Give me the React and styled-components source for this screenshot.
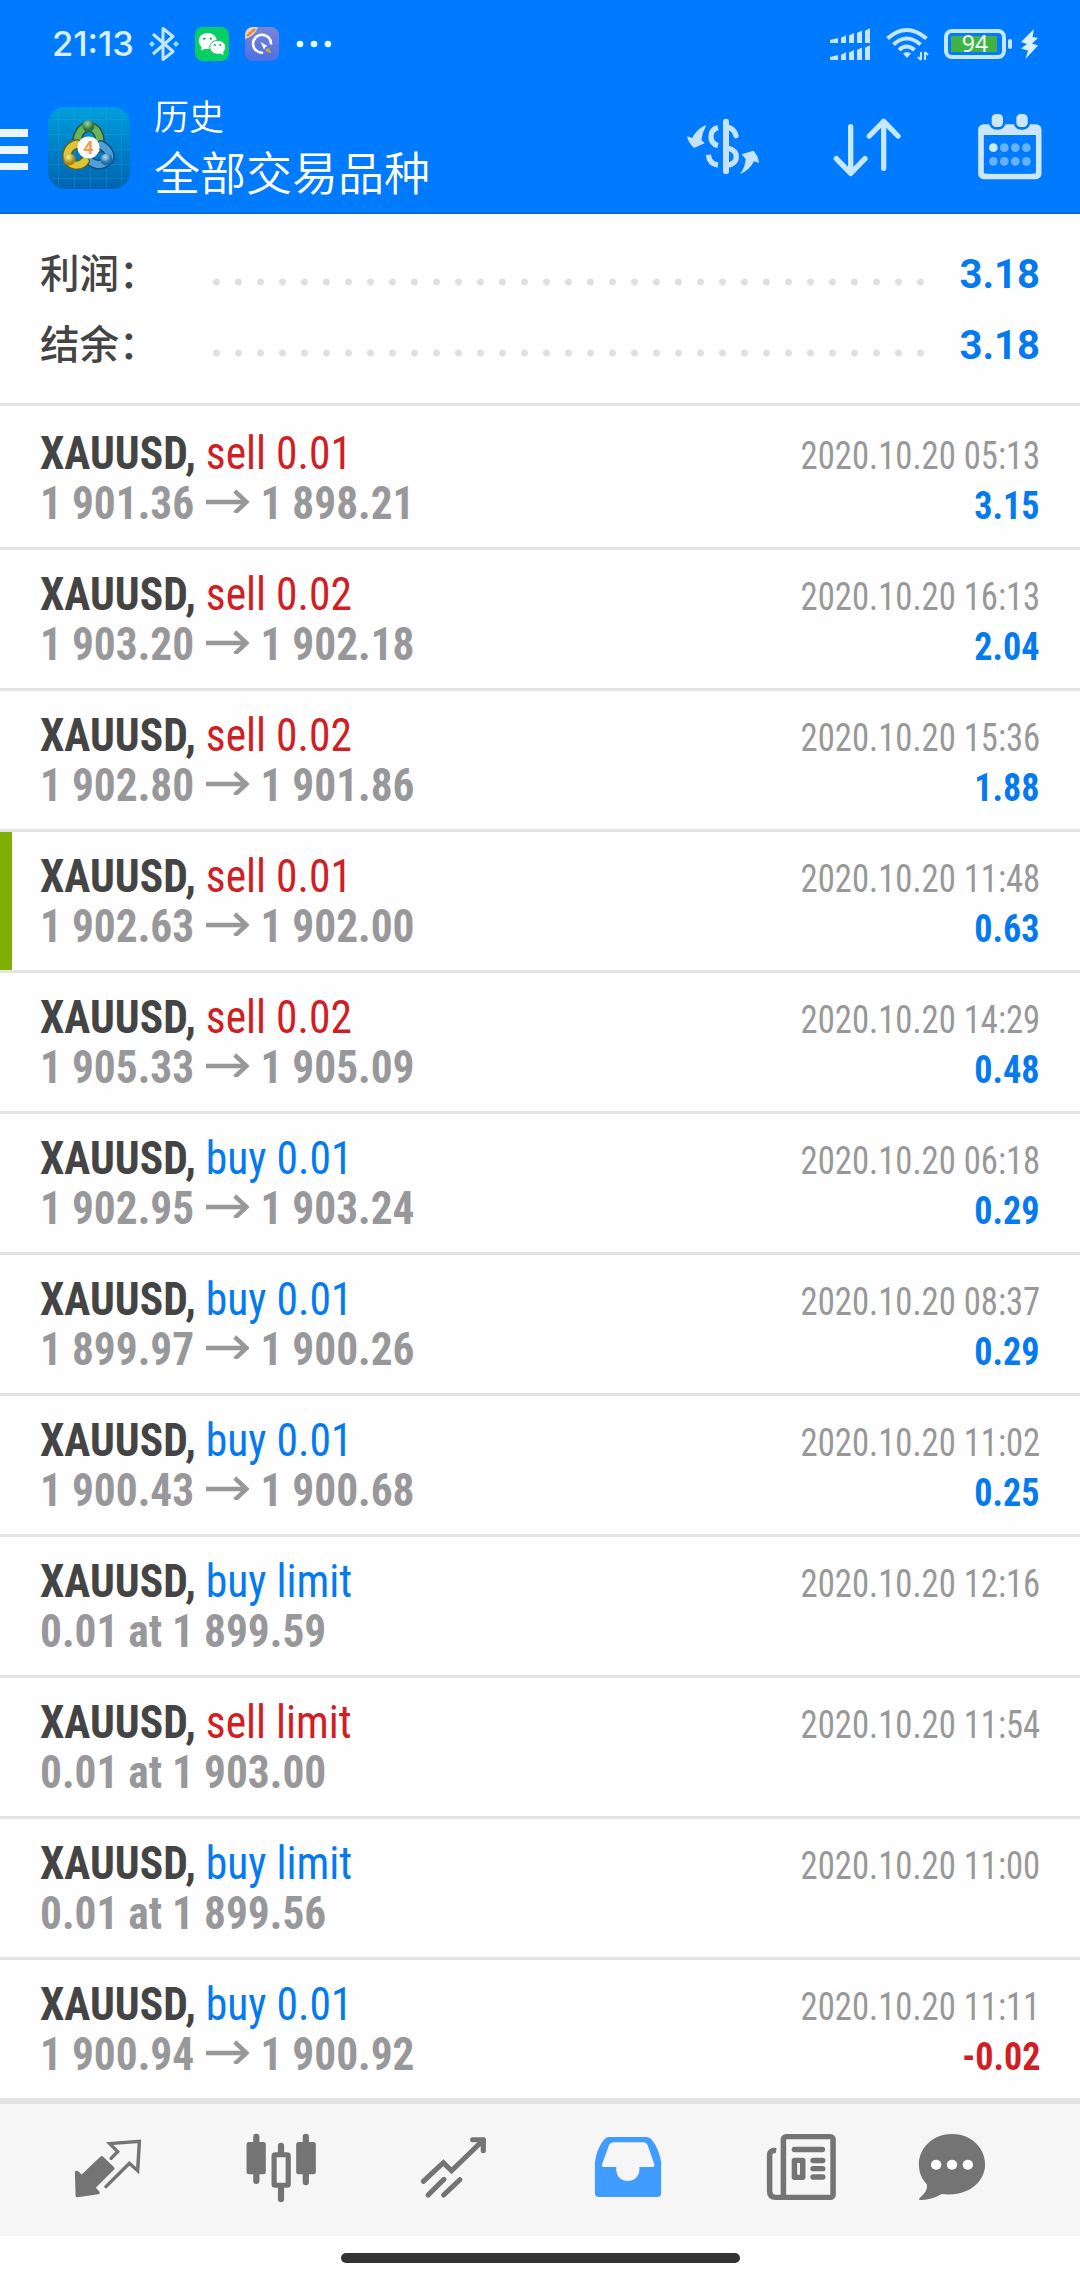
import React from 'react';
import styled, { createGlobalStyle } from 'styled-components';

const ORDERS = [
  {id: 1, type: 'sell', volume: '0.01', open: '1 901.36', close: '1 898.21', time: '2020.10.20 05:13', profit: '3.15'},
  {id: 2, type: 'sell', volume: '0.02', open: '1 903.20', close: '1 902.18', time: '2020.10.20 16:13', profit: '2.04'},
  {id: 3, type: 'sell', volume: '0.02', open: '1 902.80', close: '1 901.86', time: '2020.10.20 15:36', profit: '1.88'},
  {id: 4, type: 'sell', volume: '0.01', open: '1 902.63', close: '1 902.00', time: '2020.10.20 11:48', profit: '0.63', marked: true},
  {id: 5, type: 'sell', volume: '0.02', open: '1 905.33', close: '1 905.09', time: '2020.10.20 14:29', profit: '0.48'},
  {id: 6, type: 'buy', volume: '0.01', open: '1 902.95', close: '1 903.24', time: '2020.10.20 06:18', profit: '0.29'},
  {id: 7, type: 'buy', volume: '0.01', open: '1 899.97', close: '1 900.26', time: '2020.10.20 08:37', profit: '0.29'},
  {id: 8, type: 'buy', volume: '0.01', open: '1 900.43', close: '1 900.68', time: '2020.10.20 11:02', profit: '0.25'},
  {id: 9, type: 'buy', volume: 'limit', pending: '0.01 at 1 899.59', time: '2020.10.20 12:16'},
  {id: 10, type: 'sell', volume: 'limit', pending: '0.01 at 1 903.00', time: '2020.10.20 11:54'},
  {id: 11, type: 'buy', volume: 'limit', pending: '0.01 at 1 899.56', time: '2020.10.20 11:00'},
  {id: 12, type: 'buy', volume: '0.01', open: '1 900.94', close: '1 900.92', time: '2020.10.20 11:11', profit: '-0.02'}
];

const SUMMARY = [
  {label: '利润：', value: '3.18'},
  {label: '结余：', value: '3.18'}
];

const BLUE = '#057aee';
const RED = '#cf1f25';

const GlobalStyle = createGlobalStyle`
  body {
    margin: 0;
    background: #fefefe;
    font-family: 'Roboto Condensed', Roboto, 'Noto Sans CJK SC', sans-serif;
  }

  svg {
    display: block;
    flex: none;
  }
`;

const Screen = styled.div`
  width: 1080px;
  height: 2280px;
  display: flex;
  flex-direction: column;
  overflow: hidden;
`;

const Header = styled.header`
  height: 214px;
  box-sizing: border-box;
  background: #007aff;
  border-bottom: 2px solid #0a6bd0;
`;

const StatusBar = styled.div`
  height: 88px;
  padding: 0 41px 0 52px;
  display: flex;
  align-items: center;
`;

const Clock = styled.span`
  width: 97px;
  color: #d8f0ff;
  font: 500 34.5px/88px Inter, sans-serif;
`;

const StatusIcons = styled.div`
  display: flex;
  align-items: center;
  gap: ${({ $gap }) => $gap}px;
  margin-left: ${({ $right }) => $right ? 'auto' : '0'};
`;

const TitleBar = styled.div`
  height: 124px;
  display: flex;
  align-items: flex-start;
`;

const MenuBars = styled.div`
  width: 27.5px;
  margin: 41px 20px 0 0;
  display: flex;
  flex-direction: column;
  gap: 9px;
`;

const MenuBar = styled.span`
  height: 7.8px;
  background: #e9f6ff;
`;

const AppLogo = styled.div`
  margin: 19px 24.5px 0 0;
`;

const Titles = styled.div`
  flex: 1;
  color: #fff;
  font-family: 'Noto Sans CJK SC', sans-serif;
  font-weight: 350;
`;

const Title = styled.div`
  font-size: 35px;
  line-height: 50px;
  padding-top: 2px;
`;

const Subtitle = styled.div`
  font-size: 46px;
  line-height: 60px;
`;

const Actions = styled.div`
  display: flex;
  padding: 22px 36px 0 0;
  gap: 72px;
`;

const Summary = styled.section`
  height: 192px;
  box-sizing: border-box;
  padding: 22px 40px 0;
  border-bottom: 3px solid #e4e4e4;
`;

const SummaryRow = styled.div`
  height: 71px;
  display: flex;
  align-items: baseline;
`;

const SummaryLabel = styled.span`
  width: 172px;
  color: #444;
  font: 500 39.5px/70px 'Noto Sans CJK SC', sans-serif;
`;

const Leader = styled.span`
  width: 726px;
  height: 22px;
  align-self: flex-start;
  margin-top: 34.5px;
  background: radial-gradient(circle at 4.5px 11px, #e0e0e0 3px, transparent 4px) 0 0 / 22px 22px;
`;

const SummaryValue = styled.span`
  margin-left: auto;
  color: ${BLUE};
  font: 700 40px/70px Roboto, sans-serif;
`;

const OrderList = styled.ul`
  list-style: none;
  margin: 0;
  padding: 3px 0 0;
`;

const OrderItem = styled.li`
  height: 141px;
  box-sizing: border-box;
  padding: 19px 40px 0;
  border-bottom: 3px solid #e4e4e4;
  position: relative;
`;

const Marker = styled.span`
  position: absolute;
  left: 0;
  top: 0;
  width: 12px;
  height: 138px;
  background: #7eb000;
`;

const Line = styled.div`
  height: 50px;
  display: flex;
  align-items: baseline;
  justify-content: space-between;
  line-height: 50px;
  white-space: pre;
  font-stretch: 75%;
`;

const Symbol = styled.span`
  color: #444;
  font-size: 46px;
  font-weight: 700;
  transform: scaleX(0.946);
  transform-origin: left;
`;

const Action = styled.span`
  color: ${({ $type }) => $type === 'sell' ? RED : BLUE};
  font-weight: 400;
`;

const Price = styled.span`
  color: #98989a;
  font-size: 46px;
  font-weight: 700;
  transform: scaleX(0.943);
  transform-origin: left;
`;

const Time = styled.span`
  color: #98989a;
  font-size: 38.5px;
  transform: scaleX(0.9);
  transform-origin: right;
`;

const Profit = styled.span`
  color: ${({ $loss }) => $loss ? RED : BLUE};
  font-size: 38.5px;
  font-weight: 700;
  transform: scaleX(0.938);
  transform-origin: right;
`;

const Arrow = styled.svg`
  display: inline-block;
  margin: 0 11.4px 6px 12.6px;
`;

const TabBar = styled.nav`
  height: 138px;
  box-sizing: border-box;
  margin-top: -3px;
  padding-left: 21.5px;
  display: flex;
  position: relative;
  background: #f6f6f6;
  border-top: 6px solid #e3e3e3;
`;

const Tab = styled.div`
  width: ${({ $narrow }) => $narrow ? '130px' : '173.2px'};
  padding-top: 25px;
  display: flex;
  align-items: flex-start;
  justify-content: center;
  color: ${({ $active }) => $active ? '#409cff' : '#747474'};
`;

const HomeArea = styled.div`
  flex: 1;
  display: flex;
  justify-content: center;
  padding-top: 17px;
`;

const HomeBar = styled.div`
  width: 399px;
  height: 10px;
  border-radius: 5px;
  background: #333;
`;

function BluetoothIcon() {
  return (
    <svg width="30" height="36" viewBox="0 0 30 36" fill="none" stroke="#c2e6ff" strokeWidth="3">
      <path d="M4 8 L24 25.5 L14 33.5 V2.5 L24 10.5 L4 28" strokeLinejoin="round" />
      <path d="M3 15 l3 3 l-3 3 l-3 -3z M27 15 l3 3 l-3 3 l-3 -3z" fill="#8fe0ff" stroke="none" />
    </svg>
  );
}

function WechatIcon() {
  return (
    <svg width="34" height="34" viewBox="0 0 34 34">
      <rect width="34" height="34" rx="8" fill="#07cf63" />
      <path d="M6 23.5 l1-6 l6 3z" fill="#fff" />
      <ellipse cx="12.7" cy="14" rx="9" ry="8" fill="#fff" />
      <ellipse cx="22.7" cy="20.3" rx="8" ry="7" fill="#fff" stroke="#07cf63" strokeWidth="1" />
      <path d="M24 26 l4.5 2 l-.5-5z" fill="#fff" />
      <g fill="#07b657">
        <circle cx="9.3" cy="11.6" r="1.2" /><circle cx="15.8" cy="11.6" r="1.2" />
        <circle cx="20" cy="18" r="1" /><circle cx="25.2" cy="18" r="1" />
      </g>
    </svg>
  );
}

function BrowserIcon() {
  return (
    <svg width="34" height="34" viewBox="0 0 34 34">
      <defs>
        <clipPath id="browserClip"><rect width="34" height="34" rx="8" /></clipPath>
        <linearGradient id="browserBg" x1="0" y1="0" x2="0" y2="1">
          <stop offset="0" stopColor="#7a85d6" /><stop offset="1" stopColor="#4c6fe3" />
        </linearGradient>
      </defs>
      <g clipPath="url(#browserClip)">
        <rect width="34" height="34" fill="url(#browserBg)" />
        <path d="M0 0 H13 Q10 9 0 12z" fill="#e8cfc0" />
        <path d="M2 9 L10 2" stroke="#e08a35" strokeWidth="2.4" />
        <path d="M18 25.700 A9 9 0 1 1 26 17.500" fill="none" stroke="#fff" strokeWidth="2.600" />
        <path d="M15.500 15 L22.500 19 L20.500 20 L19 22.500z" fill="#fff" />
        <path d="M20 22 L24 21 L26.500 26 L21.500 25z" fill="#c3a24e" />
      </g>
    </svg>
  );
}

function MoreIcon() {
  return (
    <svg width="36" height="8" viewBox="0 0 36 8" fill="#e4fbff">
      <circle cx="5" cy="4" r="3.300" /><circle cx="19" cy="4" r="3.300" /><circle cx="33" cy="4" r="3.300" />
    </svg>
  );
}

// Two stacked antennas, one per SIM
function SignalIcon() {
  const bars = [0, 1, 2, 3, 4];
  return (
    <svg width="41" height="34" viewBox="0 0 41 34" fill="#c4e6ff">
      {[16, 33].map(base => bars.map(i => {
        const x = i === 0 ? 0 : 3 + i * 8;
        const w = i === 0 ? 8 : 5;
        const h = i === 0 ? 5 : 5 + i * 2.3;
        return <path key={base + '-' + i} d={`M${x} ${base} V${base - h + 2} L${x + w} ${base - h - (i === 0 ? 0 : 0.5)} V${base} z`} />;
      }))}
    </svg>
  );
}

function WifiIcon() {
  return (
    <svg width="43" height="34" viewBox="0 0 43 34" fill="none" stroke="#c4e6ff" strokeWidth="4">
      <path d="M1.5 11.5 Q20.500 -5.500 40.500 11.500" />
      <path d="M7.500 17.500 Q20.500 5.500 34.500 17.500" />
      <path d="M13 23 Q20.500 16 28.500 23" />
      <path d="M17 26.500 Q21 23.500 25 26.500 L21 31z" fill="#c4e6ff" stroke="none" />
      <path d="M35 25 V33 M35 33 l-3 -3 M39 33 V25 M39 25 l3 3" strokeWidth="2" />
    </svg>
  );
}

function BatteryIcon() {
  return (
    <svg width="69" height="32" viewBox="0 0 69 32">
      <rect x="2" y="3" width="58" height="26" rx="6" fill="none" stroke="#c4e6ff" strokeWidth="4" />
      <rect x="7" y="8" width="46" height="16" rx="1" fill="#43b244" />
      <rect x="64" y="11" width="4" height="10" rx="2" fill="#c4e6ff" />
      <text x="31" y="24" textAnchor="middle" fill="#eefcff" fontFamily="'Noto Sans', sans-serif" fontSize="23">94</text>
    </svg>
  );
}

const BoltSvg = styled.svg`
  margin-left: -7px;
`;

function BoltIcon() {
  return (
    <BoltSvg width="18" height="32" viewBox="0 0 18 32" fill="#d8f0ff">
      <path d="M13 1 L0 14 L6 16 L0 20.500 L7 22.500 L4.500 31 L17 17.500 L11 15.500 L17 10 L11.500 9z" />
    </BoltSvg>
  );
}

function LogoIcon() {
  return (
    <svg width="82" height="82" viewBox="0 0 82 82">
      <defs>
        <linearGradient id="logoBg" x1="0" y1="0" x2="0" y2="1">
          <stop offset="0" stopColor="#009fdc" />
          <stop offset="0.5" stopColor="#0080c8" />
          <stop offset="1" stopColor="#0064b0" />
        </linearGradient>
        <radialGradient id="knobGreen" cx="0.4" cy="0.3"><stop offset="0" stopColor="#a5d69a" /><stop offset="1" stopColor="#2c7540" /></radialGradient>
        <radialGradient id="knobGold" cx="0.4" cy="0.3"><stop offset="0" stopColor="#fff0a0" /><stop offset="1" stopColor="#a98a10" /></radialGradient>
        <radialGradient id="knobBlue" cx="0.4" cy="0.3"><stop offset="0" stopColor="#b5e3f8" /><stop offset="1" stopColor="#1c6aa5" /></radialGradient>
      </defs>
      <rect width="82" height="82" rx="17" fill="url(#logoBg)" />
      <path d="M10.500 3V79 M26.500 0V82 M42.500 0V82 M58.500 0V82 M73.500 3V79 M3 12.500H79 M0 27.500H82 M0 42.500H82 M0 57.500H82 M3 71.500H79" stroke="#35b5e6" strokeOpacity="0.2" />
      <g fill="none" strokeLinecap="round">
        <path d="M29.500 38 C28 27 34 20 40.500 20 C48 20 54 28 51 41" stroke="#275a38" strokeWidth="10" />
        <path d="M29.500 38 C28 27 34 20 40.500 20 C48 20 54 28 51 41" stroke="#6cb258" strokeWidth="7" />
        <path d="M53 38 C62 43 64 51 59.500 54 C53 60 44 58 38 50" stroke="#164c80" strokeWidth="10" />
        <path d="M53 38 C62 43 64 51 59.500 54 C53 60 44 58 38 50" stroke="#4f9fdb" strokeWidth="7" />
        <path d="M29 37 C20 39 17 48 20.500 54 C25 60 33 59 37 54" stroke="#5c6425" strokeWidth="10" />
        <path d="M29 37 C20 39 17 48 20.500 54 C25 60 33 59 37 54" stroke="#dcc437" strokeWidth="7" />
      </g>
      <circle cx="40.500" cy="19" r="6" fill="url(#knobGreen)" />
      <circle cx="21.500" cy="52.500" r="6" fill="url(#knobGold)" />
      <circle cx="58.500" cy="52.500" r="6" fill="url(#knobBlue)" />
      <circle cx="40.500" cy="40.500" r="11" fill="#fff" />
      <text x="40.500" y="47" textAnchor="middle" fill="#f39a4c" fontFamily="Roboto, sans-serif" fontWeight="700" fontSize="18">4</text>
    </svg>
  );
}

function CurrencyIcon() {
  return (
    <svg width="74" height="72" viewBox="135 330 222 216" fill="none" stroke="#c5e2ff" strokeWidth="16">
      <path d="M255 365 V514" strokeWidth="18" strokeLinecap="round" />
      <path d="M231 383 Q210 388 210 410 Q210 431 231 437" />
      <path d="M202 464 Q205 492 231 495" />
      <path d="M262 382 Q280 387 285 407" strokeLinecap="round" />
      <path d="M258 444 Q286 450 286 470 Q286 491 258 496" />
      <g fill="#c5e2ff" stroke="none">
        <path d="M196 375 Q184 398 181 420 L191 430 L159 444 Q141 428 138 409 L154 414 Q168 385 196 375z" />
        <path d="M297 522 Q312 503 314 477 L302 463 L337 452 Q352 466 354 489 L339 484 Q326 511 297 522z" />
      </g>
    </svg>
  );
}

function SortIcon() {
  return (
    <svg width="70" height="72" viewBox="570 330 210 216" fill="none" stroke="#c5e8ff" strokeWidth="16" strokeLinecap="round" strokeLinejoin="round">
      <path d="M626 380 V520 M583 476 L626 520 L669 476" />
      <path d="M725 505 V364 M682 408 L725 364 L768 408" />
    </svg>
  );
}

function CalendarIcon() {
  return (
    <svg width="70" height="72" viewBox="998 330 210 216">
      <rect x="1019" y="381" width="173" height="148" rx="8" fill="none" stroke="#cce6ff" strokeWidth="17" />
      <path d="M1018 378 H1192 V405 H1018z" fill="#cce6ff" />
      <rect x="1028" y="405" width="155" height="116" rx="14" fill="#007aff" />
      <rect x="1047" y="338" width="42" height="47" rx="17" fill="#cce6ff" stroke="#007aff" strokeWidth="8" />
      <rect x="1121" y="338" width="42" height="47" rx="17" fill="#cce6ff" stroke="#007aff" strokeWidth="8" />
      {[443, 484].map(y => [1056, 1089, 1122, 1155].map(x => (
        <circle key={x + '-' + y} cx={x} cy={y} r="13" fill={x === 1056 && y === 443 ? '#c5efff' : '#66b2ff'} />
      )))}
    </svg>
  );
}

function TabIcon({ cx, children }) {
  return (
    <svg width="80" height="80" viewBox={`${cx - 116} 147 232 240`} preserveAspectRatio="none" fill="none" stroke="currentColor">
      {children}
    </svg>
  );
}

function QuotesIcon() {
  return (
    <TabIcon cx={315}>
      <path d="M224 277 L239 290 L297 233 L329 265 L273 323 L286 338 L226 347 Z" fill="currentColor" strokeWidth="10" strokeLinejoin="round" />
      <path d="M324 235 L343 215 L320 191 L406 184 L401 272 L377 250 L309 320" strokeWidth="10" strokeLinecap="round" />
    </TabIcon>
  );
}

function ChartIcon() {
  return (
    <TabIcon cx={816}>
      <path d="M744.500 170 V303 M888 170 V307 M816 197 V220 M816 325 V358" strokeWidth="18" strokeLinecap="round" />
      <rect x="716" y="186" width="56" height="97" rx="7" fill="currentColor" stroke="none" />
      <rect x="860" y="186" width="57" height="97" rx="7" fill="currentColor" stroke="none" />
      <rect x="796" y="224" width="41" height="92" rx="3" strokeWidth="15" />
    </TabIcon>
  );
}

function TradeIcon() {
  return (
    <TabIcon cx={1320}>
      <path d="M1231 304 L1289 248 L1313 272 L1405 180" strokeWidth="15" strokeLinecap="round" />
      <path d="M1374 179 H1405 V212" strokeWidth="15" strokeLinecap="round" strokeLinejoin="round" />
      <path d="M1245 345 L1291 298 M1290 345 L1337 299" strokeWidth="15" strokeLinecap="round" />
    </TabIcon>
  );
}

function HistoryIcon() {
  return (
    <TabIcon cx={254}>
      <path
        d="M158 245 Q164 205 184 179 Q190 171 199 171 H308 Q317 171 323 179 Q344 206 350 245 V340 Q350 351 339 351 H170 Q158 351 158 340z
          M213 187 Q203 187 199 196 L179 252 Q176 261 184 261 H220 V270 C222 314 285 314 287 270 V261 H325 Q333 261 330 252 L311 196 Q307 187 297 187z"
        fill="currentColor"
        fillRule="evenodd"
        stroke="none"
      />
    </TabIcon>
  );
}

function NewsIcon() {
  return (
    <TabIcon cx={757}>
      <rect x="706" y="170" width="144" height="182" rx="8" strokeWidth="16" />
      <path d="M685 212 Q666 209 666 226 V332 Q666 352 684 352 H710" strokeWidth="16" />
      <path d="M738 208.500 H819 M792 241.500 H820 M792 266 H820 M792 291 H820" strokeWidth="16" strokeLinecap="round" />
      <rect x="738" y="241" width="24" height="51" strokeWidth="16" strokeLinejoin="round" />
    </TabIcon>
  );
}

function ChatIcon() {
  return (
    <TabIcon cx={1199}>
      <path
        d="M1199 162 C1253 162 1295 202 1295 253 C1295 304 1249 352 1169 342 Q1140 360 1106 360 Q1101 358 1106 353 Q1130 334 1126 313 C1110 296 1103 276 1103 253 C1103 202 1146 162 1199 162z"
        fill="currentColor"
        stroke="none"
      />
      <g fill="#fff" stroke="none">
        <circle cx="1153" cy="254" r="15" /><circle cx="1199" cy="254" r="15" /><circle cx="1245" cy="254" r="15" />
      </g>
    </TabIcon>
  );
}

// One closed deal or cancelled pending order
function Order({ order }) {
  return (
    <OrderItem>
      {order.marked && <Marker />}
      <Line>
        <Symbol>XAUUSD, <Action $type={order.type}>{order.type} {order.volume}</Action></Symbol>
        <Time>{order.time}</Time>
      </Line>
      <Line>
        {order.pending ? <Price>{order.pending}</Price> : (
          <Price>
            {order.open}
            <Arrow width="46.3" height="24" viewBox="0 0 46.3 24" fill="none" stroke="currentColor" strokeWidth="4.5">
              <path d="M0 13 H44 M30.500 2 L43 13 L30.500 24" />
            </Arrow>
            {order.close}
          </Price>
        )}
        {order.profit && <Profit $loss={order.profit.startsWith('-')}>{order.profit}</Profit>}
      </Line>
    </OrderItem>
  );
}

export default function App() {
  return (
    <Screen>
      <GlobalStyle />
      <Header>
        <StatusBar>
          <Clock>21:13</Clock>
          <StatusIcons $gap={16}>
            <BluetoothIcon />
            <WechatIcon />
            <BrowserIcon />
            <MoreIcon />
          </StatusIcons>
          <StatusIcons $gap={15} $right>
            <SignalIcon />
            <WifiIcon />
            <BatteryIcon />
            <BoltIcon />
          </StatusIcons>
        </StatusBar>
        <TitleBar>
          <MenuBars><MenuBar /><MenuBar /><MenuBar /></MenuBars>
          <AppLogo><LogoIcon /></AppLogo>
          <Titles>
            <Title>历史</Title>
            <Subtitle>全部交易品种</Subtitle>
          </Titles>
          <Actions>
            <CurrencyIcon />
            <SortIcon />
            <CalendarIcon />
          </Actions>
        </TitleBar>
      </Header>
      <Summary>
        {SUMMARY.map(item => (
          <SummaryRow key={item.label}>
            <SummaryLabel>{item.label}</SummaryLabel>
            <Leader />
            <SummaryValue>{item.value}</SummaryValue>
          </SummaryRow>
        ))}
      </Summary>
      <OrderList>
        {ORDERS.map(order => <Order key={order.id} order={order} />)}
      </OrderList>
      <TabBar>
        <Tab><QuotesIcon /></Tab>
        <Tab><ChartIcon /></Tab>
        <Tab><TradeIcon /></Tab>
        <Tab $active><HistoryIcon /></Tab>
        <Tab><NewsIcon /></Tab>
        <Tab $narrow><ChatIcon /></Tab>
      </TabBar>
      <HomeArea><HomeBar /></HomeArea>
    </Screen>
  );
}
